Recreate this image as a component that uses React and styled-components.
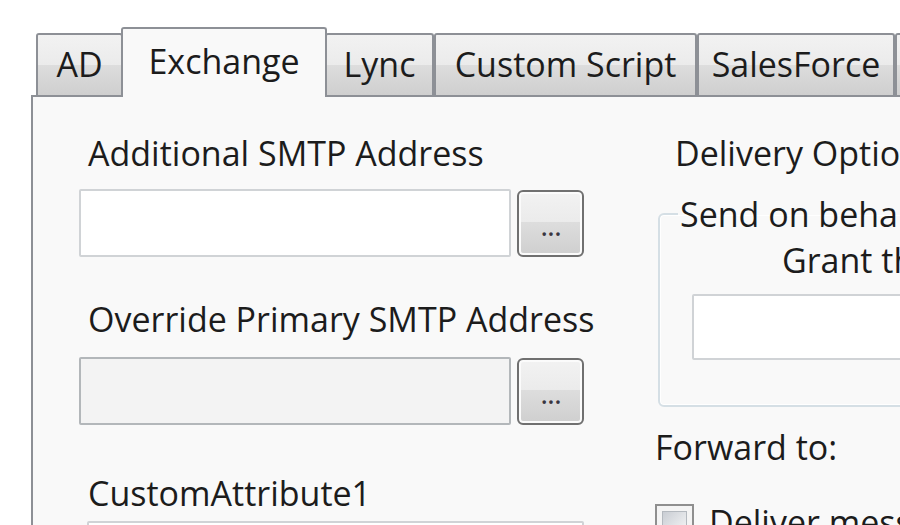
import styled, { createGlobalStyle } from 'styled-components';

const GlobalStyle = createGlobalStyle`
  html, body {
    margin: 0;
    padding: 0;
    background: #ffffff;
    overflow: hidden;
  }
  body {
    font-family: "Open Sans", "Noto Sans", sans-serif;
    color: #1c1c1c;
  }
`;

const Window = styled.div`
  width: 900px;
  height: 525px;
  overflow: hidden;
  padding-top: 27px;
  box-sizing: border-box;
`;

// Tab header strip, tabs sit on the panel's top border.
const TabStrip = styled.div`
  display: flex;
  align-items: flex-end;
  height: 68px;
  padding-left: 36px;
  position: relative;
  z-index: 1;
`;

const Tab = styled.div`
  flex: none;
  box-sizing: border-box;
  width: ${({ $width }) => $width}px;
  height: ${({ $active }) => ($active ? 70 : 62)}px;
  margin: ${({ $active }) => ($active ? '0 -2px -2px' : '0')};
  position: relative;
  z-index: ${({ $active }) => ($active ? 2 : 1)};
  border: 2px solid #8d9096;
  border-bottom: none;
  border-radius: 3px 3px 0 0;
  background: ${({ $active }) =>
    $active
      ? '#f9f9f9'
      : 'linear-gradient(#f2f2f2 0%, #ebebeb 50%, #dddddd 50%, #cfcfcf 100%)'};
  display: flex;
  justify-content: center;
  padding-top: ${({ $active }) => ($active ? 9 : 6)}px;
  font-size: 34px;
  line-height: 46px;
  white-space: nowrap;
`;

const Panel = styled.div`
  margin-left: 31px;
  height: 430px;
  box-sizing: border-box;
  border-top: 2px solid #8d9096;
  border-left: 2px solid #8d9096;
  background: #f9f9f9;
  display: grid;
  grid-template-columns: 505px 460px;
  column-gap: 71px;
  padding: 33px 0 0 46px;
`;

const Column = styled.div`
  display: flex;
  flex-direction: column;
  align-items: stretch;
`;

const Label = styled.div`
  font-size: 34px;
  line-height: 46px;
  white-space: nowrap;
  margin-top: ${({ $top }) => $top || 0}px;
  padding-left: ${({ $indent }) => ($indent === undefined ? 9 : $indent)}px;
`;

const InputRow = styled.div`
  display: flex;
  align-items: center;
  gap: 6px;
  margin-top: ${({ $top }) => $top}px;
  padding-left: ${({ $inset }) => $inset || 0}px;
`;

const TextBox = styled.div`
  flex: 1;
  height: ${({ $height }) => $height || 68}px;
  box-sizing: border-box;
  border: 2px solid ${({ $disabled }) => ($disabled ? '#b3b7ba' : '#d0d3d6')};
  border-radius: 2px;
  background: ${({ $disabled }) => ($disabled ? '#f3f3f3' : '#ffffff')};
`;

const BrowseButton = styled.div`
  flex: none;
  width: 67px;
  height: 67px;
  box-sizing: border-box;
  border: 2px solid #707070;
  border-radius: 6px;
  box-shadow: inset 0 0 0 2px #fbfbfb;
  background: linear-gradient(#f2f2f2 0%, #ebebeb 48%, #dddddd 48%, #cfcfcf 100%);
  display: flex;
  align-items: center;
  justify-content: center;
  padding-top: 4px;
  font-size: 30px;
  line-height: 34px;
  color: #3a3540;
  letter-spacing: -1px;
`;

const GroupBox = styled.fieldset`
  margin: 15px 0 0 3px;
  padding: 0 0 45px 32px;
  border: 2px solid #d5dfe5;
  border-radius: 6px;
  min-inline-size: 0;
  box-shadow: inset 0 0 0 1px #ffffff;
`;

const Legend = styled.legend`
  margin-left: -14px;
  padding: 0 2px;
  font-size: 34px;
  line-height: 46px;
  white-space: nowrap;
`;

const CheckRow = styled.div`
  display: flex;
  align-items: flex-start;
  gap: 15px;
  margin-top: 29px;
  font-size: 34px;
  line-height: 46px;
  white-space: nowrap;
`;

const CheckBox = styled.div`
  flex: none;
  width: 39px;
  height: 39px;
  margin-top: 5px;
  box-sizing: border-box;
  border: 2px solid #8f8f8f;
  background: #f4f4f4;
  display: flex;
  align-items: center;
  justify-content: center;

  &::after {
    content: '';
    width: 25px;
    height: 25px;
    box-sizing: border-box;
    border: 1px solid #b4b9bf;
    background: linear-gradient(135deg, #c9cdd3 0%, #e3e5e8 55%, #f7f7f7 100%);
  }
`;

const tabs = [
  { label: 'AD', width: 87 },
  { label: 'Exchange', width: 206, active: true },
  { label: 'Lync', width: 109 },
  { label: 'Custom Script', width: 263 },
  { label: 'SalesForce', width: 198 },
  { label: 'Office 365', width: 180 },
];

const fields = [
  { label: 'Additional SMTP Address', top: 0, gap: 13, browse: true },
  { label: 'Override Primary SMTP Address', top: 39, gap: 15, browse: true, disabled: true },
  { label: 'CustomAttribute1', top: 45, gap: 5, inset: 8 },
];

export default function App() {
  return (
    <Window>
      <GlobalStyle />
      <TabStrip>
        {tabs.map((t) => (
          <Tab key={t.label} $width={t.width} $active={t.active}>
            {t.label}
          </Tab>
        ))}
      </TabStrip>
      <Panel>
        <Column>
          {fields.map((f) => (
            <div key={f.label}>
              <Label $top={f.top}>{f.label}</Label>
              <InputRow $top={f.gap} $inset={f.inset}>
                <TextBox $disabled={f.disabled} />
                {f.browse && <BrowseButton>...</BrowseButton>}
              </InputRow>
            </div>
          ))}
        </Column>
        <Column>
          <Label $indent={20}>Delivery Options</Label>
          <GroupBox>
            <Legend>Send on behalf</Legend>
            <Label $indent={90}>Grant this permission to:</Label>
            <InputRow $top={11}>
              <TextBox $height={66} />
            </InputRow>
          </GroupBox>
          <Label $indent={0} $top={17}>Forward to:</Label>
          <CheckRow>
            <CheckBox />
            <span>Deliver messages to both forwarding address and mailbox</span>
          </CheckRow>
        </Column>
      </Panel>
    </Window>
  );
}
